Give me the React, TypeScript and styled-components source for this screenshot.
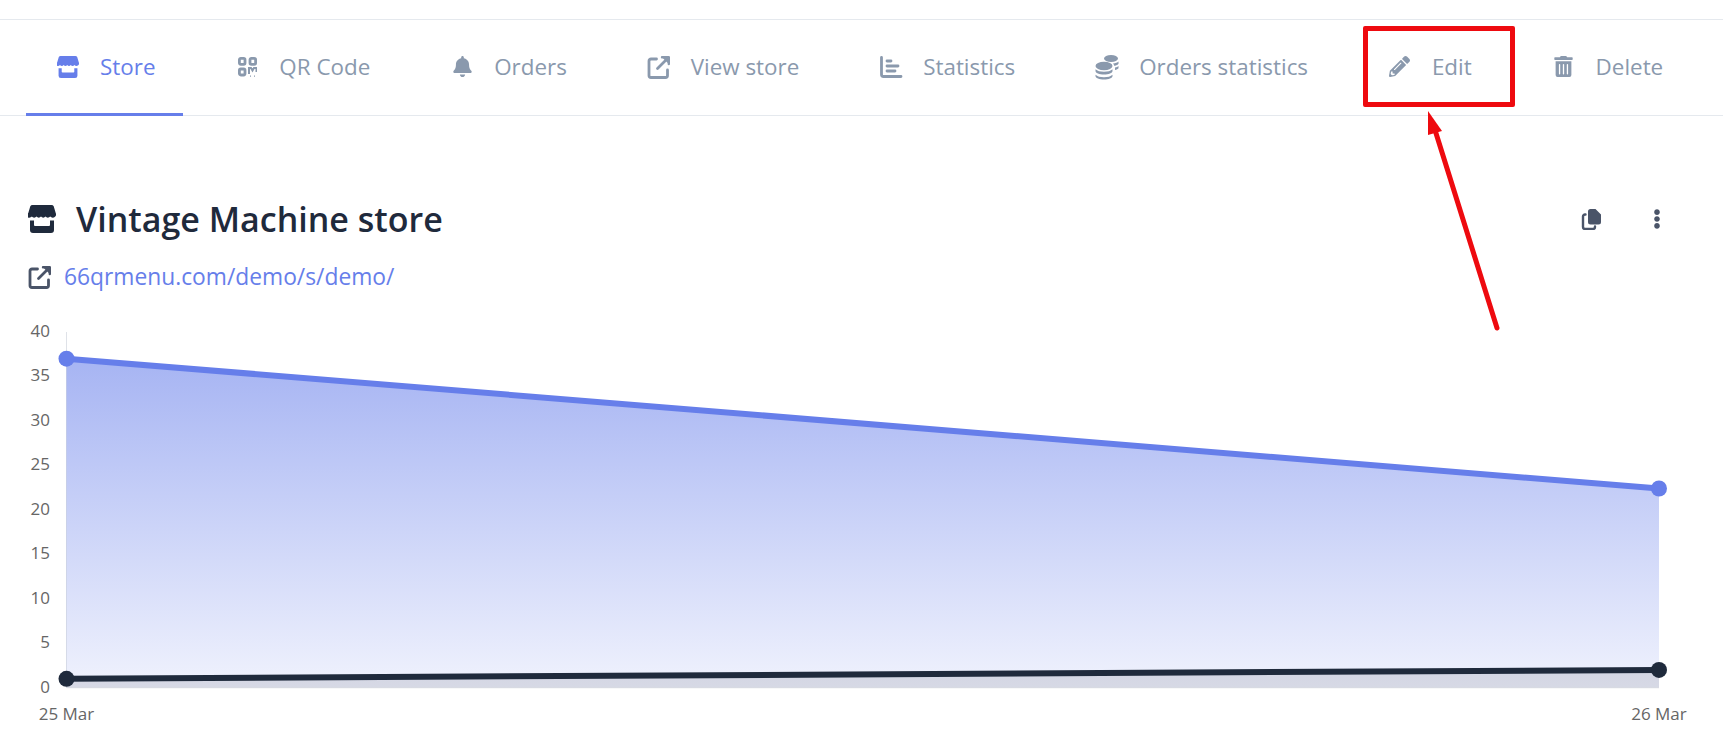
import React from 'react';
import styled, { createGlobalStyle } from 'styled-components';
import { FaBell, FaPencilAlt, FaTrashAlt, FaEllipsisV } from 'react-icons/fa';

const GlobalStyle = createGlobalStyle`
  html, body {
    margin: 0;
    padding: 0;
    background: #fff;
    font-family: "Open Sans", "Noto Sans", "Liberation Sans", sans-serif;
  }
`;

const Page = styled.div`
  position: relative;
  width: 1723px;
  height: 747px;
  overflow: hidden;
  padding-top: 19px;
  box-sizing: border-box;
`;

const Nav = styled.nav`
  display: flex;
  gap: 21.9px;
  height: 97px;
  box-sizing: border-box;
  padding-left: 26px;
  border-top: 1px solid #e5e9ee;
  border-bottom: 1px solid #e5e9ee;
`;

const Tab = styled.a<{ $active?: boolean }>`
  display: flex;
  align-items: center;
  gap: 19px;
  height: 96px;
  box-sizing: border-box;
  padding: 0 28px 0 29px;
  font-size: 22.4px;
  color: ${p => (p.$active ? '#667eea' : '#8a99ad')};
  border-bottom: 3px solid ${p => (p.$active ? '#667eea' : 'transparent')};
  white-space: nowrap;
`;

const TabIcon = styled.span`
  display: flex;
  align-items: center;
  justify-content: center;
  width: 26px;
  height: 26px;
`;

const Content = styled.main`
  padding: 81px 26px 0 28px;
`;

const HeaderRow = styled.div`
  display: flex;
  justify-content: space-between;
  align-items: center;
`;

const TitleGroup = styled.div`
  display: flex;
  align-items: center;
  gap: 20px;
  color: #1f2a3c;
`;

const Title = styled.h1`
  margin: 0;
  font-size: 34px;
  line-height: 44px;
  font-weight: 600;
  color: #1f2a3c;
`;

const Actions = styled.div`
  display: flex;
  align-items: center;
  gap: 44px;
  padding-right: 30px;
  color: #4a5468;
`;

const LinkRow = styled.div`
  display: flex;
  align-items: center;
  gap: 12px;
  margin-top: 20px;
  color: #4a5468;
`;

const StoreLink = styled.a`
  font-size: 22.8px;
  line-height: 32px;
  color: #667eea;
`;

const ChartBox = styled.div`
  margin: 6.5px 0 0 -28px;
`;

const AxisLabel = styled.text`
  font-family: "Open Sans", "Noto Sans", sans-serif;
  font-size: 17px;
  fill: #666;
`;

const RedBox = styled.div`
  position: absolute;
  left: 1363px;
  top: 26px;
  width: 152px;
  height: 81px;
  box-sizing: border-box;
  border: 5px solid #ee0a0f;
  border-radius: 2px;
`;

const ArrowSvg = styled.svg`
  position: absolute;
  left: 1410px;
  top: 100px;
`;

const StoreIcon = ({ width, height }: { width: number; height: number }) => (
  <svg width={width} height={height} viewBox="0 0 28 28" fill="currentColor">
    <path d="M4.500 0h19a2.500 2.500 0 0 1 2.200 1.300L27.700 8a3.300 3.300 0 0 1-.7 3.800c-1.500 1.400-3.700 1.100-4.800-.2-1.100 1.500-3.600 1.500-4.700 0-1.100 1.500-3.400 1.500-4.500 0-1.100 1.500-3.400 1.500-4.500 0-1.100 1.500-3.600 1.500-4.700 0-1.100 1.300-3.300 1.600-4.800.2A3.300 3.300 0 0 1 .3 8l2-6.700A2.500 2.500 0 0 1 4.500 0z" />
    <path d="M2 15.500h4V20a1 1 0 0 0 1 1h14a1 1 0 0 0 1-1v-4.500h4V25a3 3 0 0 1-3 3H5a3 3 0 0 1-3-3z" />
  </svg>
);

const QrIcon = () => (
  <svg width="19" height="20" viewBox="0 0 19 20" fill="none" stroke="currentColor" strokeWidth="2.800">
    <rect x="1.400" y="1.400" width="5.600" height="6" rx="1.400" />
    <rect x="12" y="1.400" width="5.600" height="6" rx="1.400" />
    <rect x="1.400" y="12" width="5.600" height="6" rx="1.400" />
    <path d="M11 17v-6h2l1.500 2.500L16 11h2.500v4" strokeWidth="2" />
    <path d="M12 19.200h1M16 19.200h1" strokeWidth="1.200" />
  </svg>
);

const ExternalIcon = ({ size }: { size: number }) => (
  <svg width={size} height={size} viewBox="0 0 24 24" fill="none" stroke="currentColor" strokeWidth="2.800" strokeLinecap="round" strokeLinejoin="round">
    <path d="M9.500 4H4A2 2 0 0 0 2 6v14.500a2 2 0 0 0 2 2h14.500a2 2 0 0 0 2-2V15" />
    <path d="M10.500 13.500L20 4" />
    <path d="M15 2.200h6.800V9" strokeWidth="2.400" fill="currentColor" />
  </svg>
);

const StatsIcon = () => (
  <svg width="24" height="24" viewBox="0 0 24 24" fill="none" stroke="currentColor" strokeWidth="2.800" strokeLinecap="round">
    <path d="M2.500 2.500v17a2 2 0 0 0 2 2H22" />
    <path d="M8 6h4M8 11h11M8 16h8" />
  </svg>
);

// two stacks of coins, as in the orders statistics tab
const CoinsIcon = () => (
  <svg width="24" height="26" viewBox="0 0 24 26" fill="currentColor">
    <ellipse cx="16" cy="4.500" rx="7" ry="3.500" />
    <path d="M18 9.500c2.500-.2 4.500-1 5.500-2v2.300c-.5 1-2.200 1.900-4 2.200-.3-1-.8-1.800-1.500-2.500z" />
    <path d="M20 13.600c1.500-.3 2.800-.8 3.500-1.600v2.300c-.5.800-1.800 1.500-3.500 1.800z" />
    <ellipse cx="9" cy="12" rx="8.500" ry="4.200" />
    <path d="M.5 15.200c1.700 1.700 4.800 2.500 8.500 2.500s6.800-.8 8.500-2.500v1.800c0 2-3.800 3.500-8.500 3.500S.5 19 .5 17z" />
    <path d="M.5 20.700c1.700 1.700 4.800 2.500 8.500 2.500s6.800-.8 8.500-2.500v1.300c0 2-3.800 3.500-8.500 3.500S.5 24 .5 22z" />
  </svg>
);

const CopyIcon = () => (
  <svg width="22" height="22" viewBox="0 0 22 22" fill="currentColor">
    <path d="M9.500 1h5l5.500 5.500V14a2.500 2.500 0 0 1-2.500 2.500h-8A2.500 2.500 0 0 1 7 14V3.500A2.500 2.500 0 0 1 9.500 1z" />
    <path d="M4.500 6.500H4A2 2 0 0 0 2 8.500V19a2 2 0 0 0 2 2h8a2 2 0 0 0 2-2v-.5" fill="none" stroke="currentColor" strokeWidth="2.400" strokeLinecap="round" />
  </svg>
);

const tabs = [
  { label: 'Store', icon: <StoreIcon width={22} height={24} />, active: true },
  { label: 'QR Code', icon: <QrIcon /> },
  { label: 'Orders', icon: <FaBell size={21} /> },
  { label: 'View store', icon: <ExternalIcon size={24} /> },
  { label: 'Statistics', icon: <StatsIcon /> },
  { label: 'Orders statistics', icon: <CoinsIcon /> },
  { label: 'Edit', icon: <FaPencilAlt size={21} /> },
  { label: 'Delete', icon: <FaTrashAlt size={21} /> },
];

const X0 = 66.5;
const X1 = 1659;
const CHART_TOP = 300;
const yOf = (v: number) => 387.7 - (355.7 * v) / 40;

const blue = [37, 22.4];
const dark = [1, 2];

const Chart = () => {
  const by0 = yOf(blue[0]);
  const by1 = yOf(blue[1]);
  const dy0 = yOf(dark[0]);
  const dy1 = yOf(dark[1]);
  const base = yOf(0);
  return (
    <svg width="1723" height={747 - CHART_TOP} viewBox={`0 0 1723 ${747 - CHART_TOP}`}>
      <defs>
        <linearGradient id="blueFill" gradientUnits="userSpaceOnUse" x1="0" y1={by0} x2="0" y2={base}>
          <stop offset="0" stopColor="#667eea" stopOpacity="0.58" />
          <stop offset="1" stopColor="#667eea" stopOpacity="0.1" />
        </linearGradient>
      </defs>
      <line x1={X0} y1={yOf(40)} x2={X0} y2={base} stroke="#dfe2e8" strokeWidth="1" />
      <path d={`M${X0} ${by0}L${X1} ${by1}V${base}H${X0}Z`} fill="url(#blueFill)" />
      <path d={`M${X0} ${dy0}L${X1} ${dy1}V${base}H${X0}Z`} fill="#1f2a3c" fillOpacity="0.12" />
      <line x1={X0} y1={base} x2={X1} y2={base} stroke="#d5d8e0" strokeWidth="1" />
      <line x1={X0} y1={by0} x2={X1} y2={by1} stroke="#667eea" strokeWidth="6" />
      <line x1={X0} y1={dy0} x2={X1} y2={dy1} stroke="#1f2a3c" strokeWidth="6" />
      <circle cx={X0} cy={by0} r="8" fill="#667eea" />
      <circle cx={X1} cy={by1} r="8" fill="#667eea" />
      <circle cx={X0} cy={dy0} r="8" fill="#1f2a3c" />
      <circle cx={X1} cy={dy1} r="8" fill="#1f2a3c" />
      {[0, 5, 10, 15, 20, 25, 30, 35, 40].map(v => (
        <AxisLabel key={v} x="50" y={yOf(v) + 5} textAnchor="end">{v}</AxisLabel>
      ))}
      <AxisLabel x={X0} y={420} textAnchor="middle">25 Mar</AxisLabel>
      <AxisLabel x={X1} y={420} textAnchor="middle">26 Mar</AxisLabel>
    </svg>
  );
};

export default function App() {
  return (
    <Page>
      <GlobalStyle />
      <Nav>
        {tabs.map(t => (
          <Tab key={t.label} $active={t.active}>
            <TabIcon>{t.icon}</TabIcon>
            {t.label}
          </Tab>
        ))}
      </Nav>
      <Content>
        <HeaderRow>
          <TitleGroup>
            <StoreIcon width={28} height={28} />
            <Title>Vintage Machine store</Title>
          </TitleGroup>
          <Actions>
            <CopyIcon />
            <FaEllipsisV size={20} />
          </Actions>
        </HeaderRow>
        <LinkRow>
          <ExternalIcon size={24} />
          <StoreLink>66qrmenu.com/demo/s/demo/</StoreLink>
        </LinkRow>
        <ChartBox>
          <Chart />
        </ChartBox>
      </Content>
      <RedBox />
      <ArrowSvg width="100" height="240" viewBox="0 0 100 240">
        <line x1="87" y1="228" x2="25" y2="30" stroke="#ee0a0f" strokeWidth="5" strokeLinecap="round" />
        <polygon points="18,11 18,35 32,31" fill="#ee0a0f" />
      </ArrowSvg>
    </Page>
  );
}
